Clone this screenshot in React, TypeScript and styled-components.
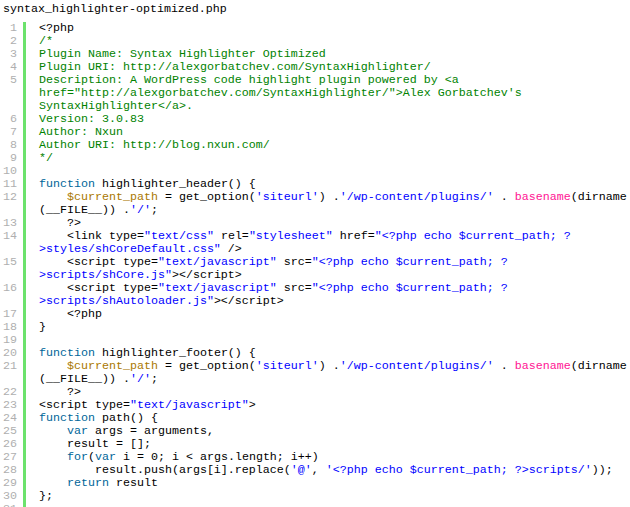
import React from "react";
import styled, { createGlobalStyle } from "styled-components";

const Global = createGlobalStyle`
  html, body {
    margin: 0;
    padding: 0;
    background: #ffffff;
    overflow: hidden;
  }
`;

type Kind = "p" | "c" | "k" | "v" | "s" | "f";
type Tok = [Kind, string];
type Row = Tok[];
type Line = Row[];

const colors: Record<Kind, string> = {
  p: "#000000",
  c: "#008200",
  k: "#006699",
  v: "#aa7700",
  s: "#0000ff",
  f: "#ff1493",
};

const Page = styled.div`
  font-family: "Liberation Mono", "DejaVu Sans Mono", monospace;
  font-size: 11.67px;
  line-height: 13px;
  color: #000;
  width: 630px;
`;

const Title = styled.div`
  padding: 3px 0 6px 3px;
  height: 13px;
  white-space: pre;
`;

const Code = styled.div`
  display: grid;
  grid-template-columns: 17px 1fr;
`;

const Num = styled.div`
  color: #afafaf;
  text-align: right;
  white-space: pre;
`;

const Body = styled.div`
  margin-left: 6px;
  border-left: 3px solid #6ce26c;
  padding-left: 13px;
  overflow: hidden;
`;

const RowLine = styled.div`
  white-space: pre;
  height: 13px;
`;

const Span = styled.span<{ $k: Kind }>`
  color: ${(p) => colors[p.$k]};
`;

const php = '"<?php echo $current_path; ?';

const getOpt: Line = [
  [
    ["p", "    "],
    ["v", "$current_path"],
    ["p", " = get_option("],
    ["s", "'siteurl'"],
    ["p", ") ."],
    ["s", "'/wp-content/plugins/'"],
    ["p", " . "],
    ["f", "basename"],
    ["p", "(dirname"],
  ],
  [
    ["p", "(__FILE__)) ."],
    ["s", "'/'"],
    ["p", ";"],
  ],
];

const lines: Line[] = [
  [[["p", "<?php"]]],
  [[["c", "/*"]]],
  [[["c", "Plugin Name: Syntax Highlighter Optimized"]]],
  [[["c", "Plugin URI: http://alexgorbatchev.com/SyntaxHighlighter/"]]],
  [
    [["c", "Description: A WordPress code highlight plugin powered by <a"]],
    [["c", 'href="http://alexgorbatchev.com/SyntaxHighlighter/">Alex Gorbatchev\'s']],
    [["c", "SyntaxHighlighter</a>."]],
  ],
  [[["c", "Version: 3.0.83"]]],
  [[["c", "Author: Nxun"]]],
  [[["c", "Author URI: http://blog.nxun.com/"]]],
  [[["c", "*/"]]],
  [[]],
  [[["k", "function"], ["p", " highlighter_header() {"]]],
  getOpt,
  [[["p", "    ?>"]]],
  [
    [
      ["p", "    <link type="],
      ["s", '"text/css"'],
      ["p", " rel="],
      ["s", '"stylesheet"'],
      ["p", " href="],
      ["s", php],
    ],
    [
      ["s", '>styles/shCoreDefault.css"'],
      ["p", " />"],
    ],
  ],
  [
    [
      ["p", "    <script type="],
      ["s", '"text/javascript"'],
      ["p", " src="],
      ["s", php],
    ],
    [
      ["s", '>scripts/shCore.js"'],
      ["p", "></script>"],
    ],
  ],
  [
    [
      ["p", "    <script type="],
      ["s", '"text/javascript"'],
      ["p", " src="],
      ["s", php],
    ],
    [
      ["s", '>scripts/shAutoloader.js"'],
      ["p", "></script>"],
    ],
  ],
  [[["p", "    <?php"]]],
  [[["p", "}"]]],
  [[]],
  [[["k", "function"], ["p", " highlighter_footer() {"]]],
  getOpt,
  [[["p", "    ?>"]]],
  [[["p", "<script type="], ["s", '"text/javascript"'], ["p", ">"]]],
  [[["k", "function"], ["p", " path() {"]]],
  [[["p", "    "], ["k", "var"], ["p", " args = arguments,"]]],
  [[["p", "    result = [];"]]],
  [
    [
      ["p", "    "],
      ["k", "for"],
      ["p", "("],
      ["k", "var"],
      ["p", " i = 0; i < args.length; i++)"],
    ],
  ],
  [
    [
      ["p", "        result.push(args[i].replace("],
      ["s", "'@'"],
      ["p", ", "],
      ["s", "'<?php echo $current_path; ?>scripts/'"],
      ["p", "));"],
    ],
  ],
  [[["p", "    "], ["k", "return"], ["p", " result"]]],
  [[["p", "};"]]],
  [[]],
];

export default function App() {
  return (
    <Page>
      <Global />
      <Title>syntax_highlighter-optimized.php</Title>
      <Code>
        {lines.map((line, i) => (
          <React.Fragment key={i}>
            <Num>{i + 1}</Num>
            <Body>
              {line.map((row, j) => (
                <RowLine key={j}>
                  {row.map(([k, t], n) => (
                    <Span key={n} $k={k}>
                      {t}
                    </Span>
                  ))}
                </RowLine>
              ))}
            </Body>
          </React.Fragment>
        ))}
      </Code>
    </Page>
  );
}
